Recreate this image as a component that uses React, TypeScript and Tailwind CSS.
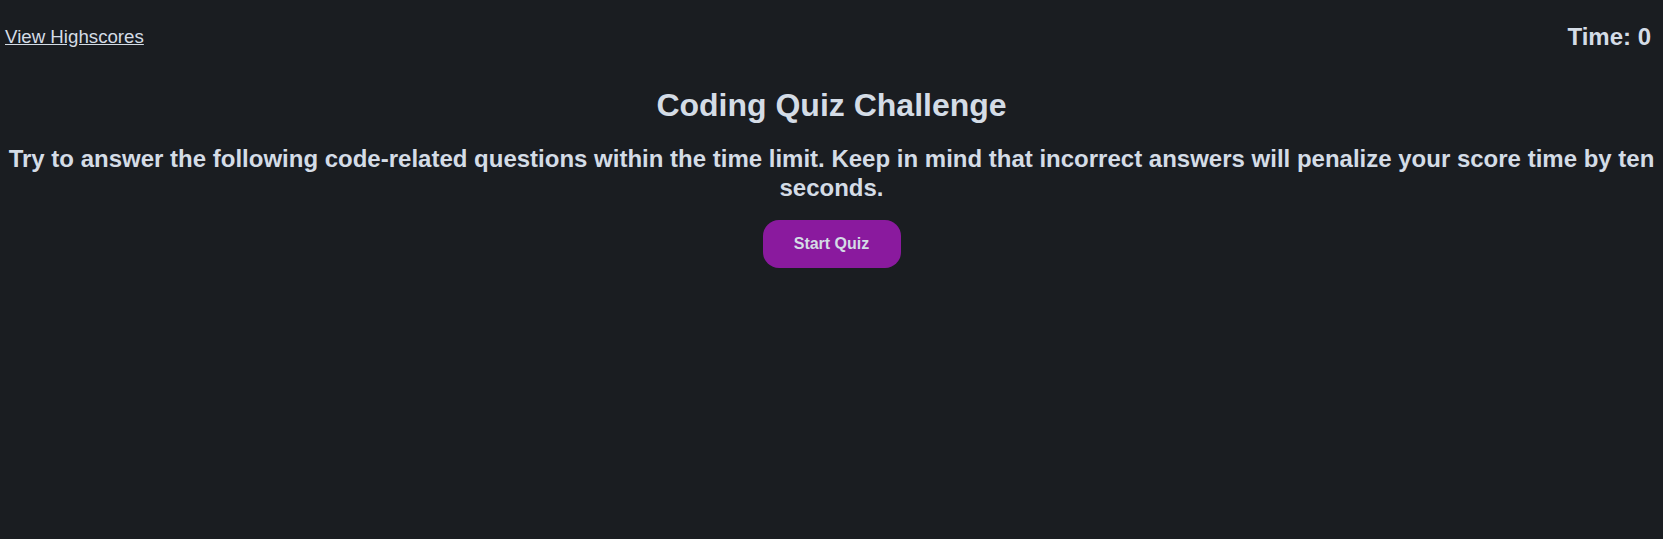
import React from "react";

export default function App() {
  return (
    <div
      className="min-h-[539px] w-full bg-[#1a1d21] text-[#d4dce6]"
      style={{ fontFamily: '"Liberation Sans", Arial, Helvetica, sans-serif' }}
    >
      <header className="flex items-center justify-between pl-[5px] pr-[12px] pt-[23px]">
        <a href="#" className="text-[18.7px] leading-[28px] underline">
          View Highscores
        </a>
        <div className="text-[24px] font-bold leading-[28px]">Time: 0</div>
      </header>
      <main className="mt-[36px] flex flex-col items-center text-center">
        <h1 className="text-[32px] font-bold leading-[37px]">Coding Quiz Challenge</h1>
        <p className="mt-[20px] text-[24px] font-bold leading-[29px]">
          Try to answer the following code-related questions within the time limit. Keep in mind that incorrect answers will penalize your score time by ten seconds.
        </p>
        <button className="mt-[18px] h-[48px] w-[138px] rounded-[16px] bg-[#8a1a9e] text-[16px] font-bold text-[#d4dce6]">
          Start Quiz
        </button>
      </main>
    </div>
  );
}
